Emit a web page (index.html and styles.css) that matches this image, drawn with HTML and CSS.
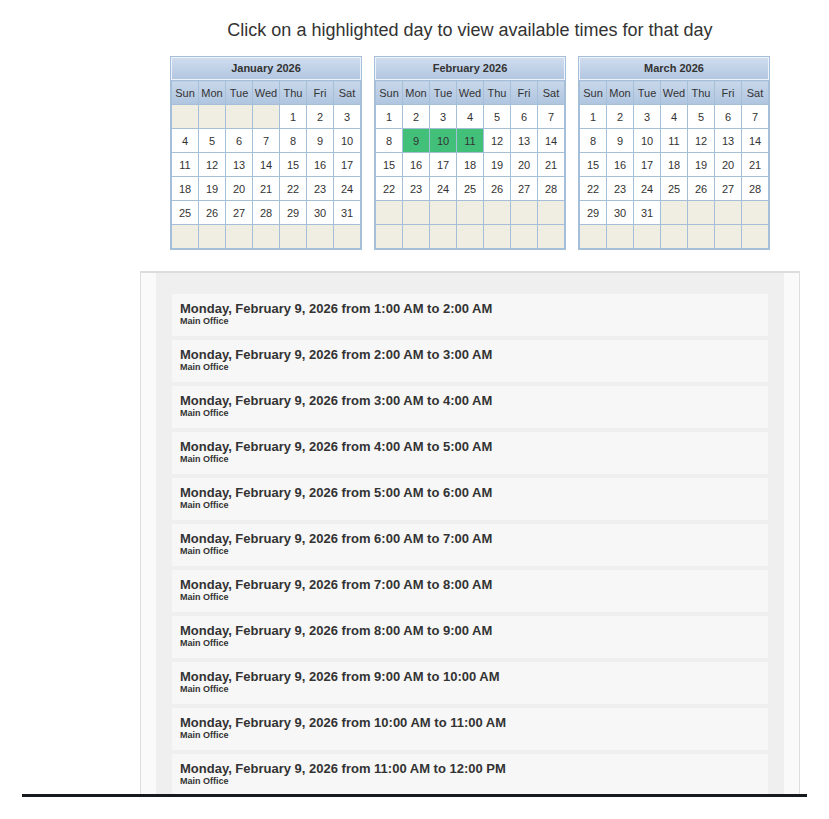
FILE: index.html
```html
<!DOCTYPE html>
<html lang="en">
  <head>
    <meta charset="UTF-8" />
    <meta name="viewport" content="width=device-width, initial-scale=1.0" />
    <title>Book an Appointment</title>
    <link rel="stylesheet" href="styles.css">
  </head>
  <body>
    <div class="wrap">
      <h1 class="intro">Click on a highlighted day to view available times for that day</h1>

      <div class="cals">
        <div class="cal">
          <div class="cal-title">January 2026</div>
          <table>
            <tr><th>Sun</th><th>Mon</th><th>Tue</th><th>Wed</th><th>Thu</th><th>Fri</th><th>Sat</th></tr>
            <tr><td class="off"></td><td class="off"></td><td class="off"></td><td class="off"></td><td>1</td><td>2</td><td>3</td></tr>
            <tr><td>4</td><td>5</td><td>6</td><td>7</td><td>8</td><td>9</td><td>10</td></tr>
            <tr><td>11</td><td>12</td><td>13</td><td>14</td><td>15</td><td>16</td><td>17</td></tr>
            <tr><td>18</td><td>19</td><td>20</td><td>21</td><td>22</td><td>23</td><td>24</td></tr>
            <tr><td>25</td><td>26</td><td>27</td><td>28</td><td>29</td><td>30</td><td>31</td></tr>
            <tr><td class="off"></td><td class="off"></td><td class="off"></td><td class="off"></td><td class="off"></td><td class="off"></td><td class="off"></td></tr>
          </table>
        </div>

        <div class="cal">
          <div class="cal-title">February 2026</div>
          <table>
            <tr><th>Sun</th><th>Mon</th><th>Tue</th><th>Wed</th><th>Thu</th><th>Fri</th><th>Sat</th></tr>
            <tr><td>1</td><td>2</td><td>3</td><td>4</td><td>5</td><td>6</td><td>7</td></tr>
            <tr><td>8</td><td class="open">9</td><td class="open">10</td><td class="open">11</td><td>12</td><td>13</td><td>14</td></tr>
            <tr><td>15</td><td>16</td><td>17</td><td>18</td><td>19</td><td>20</td><td>21</td></tr>
            <tr><td>22</td><td>23</td><td>24</td><td>25</td><td>26</td><td>27</td><td>28</td></tr>
            <tr><td class="off"></td><td class="off"></td><td class="off"></td><td class="off"></td><td class="off"></td><td class="off"></td><td class="off"></td></tr>
            <tr><td class="off"></td><td class="off"></td><td class="off"></td><td class="off"></td><td class="off"></td><td class="off"></td><td class="off"></td></tr>
          </table>
        </div>

        <div class="cal">
          <div class="cal-title">March 2026</div>
          <table>
            <tr><th>Sun</th><th>Mon</th><th>Tue</th><th>Wed</th><th>Thu</th><th>Fri</th><th>Sat</th></tr>
            <tr><td>1</td><td>2</td><td>3</td><td>4</td><td>5</td><td>6</td><td>7</td></tr>
            <tr><td>8</td><td>9</td><td>10</td><td>11</td><td>12</td><td>13</td><td>14</td></tr>
            <tr><td>15</td><td>16</td><td>17</td><td>18</td><td>19</td><td>20</td><td>21</td></tr>
            <tr><td>22</td><td>23</td><td>24</td><td>25</td><td>26</td><td>27</td><td>28</td></tr>
            <tr><td>29</td><td>30</td><td>31</td><td class="off"></td><td class="off"></td><td class="off"></td><td class="off"></td></tr>
            <tr><td class="off"></td><td class="off"></td><td class="off"></td><td class="off"></td><td class="off"></td><td class="off"></td><td class="off"></td></tr>
          </table>
        </div>
      </div>

      <div class="times">
        <div class="times-inner">
          <div class="slot"><div class="slot-when">Monday, February 9, 2026 from 1:00 AM to 2:00 AM</div><div class="slot-where">Main Office</div></div>
          <div class="slot"><div class="slot-when">Monday, February 9, 2026 from 2:00 AM to 3:00 AM</div><div class="slot-where">Main Office</div></div>
          <div class="slot"><div class="slot-when">Monday, February 9, 2026 from 3:00 AM to 4:00 AM</div><div class="slot-where">Main Office</div></div>
          <div class="slot"><div class="slot-when">Monday, February 9, 2026 from 4:00 AM to 5:00 AM</div><div class="slot-where">Main Office</div></div>
          <div class="slot"><div class="slot-when">Monday, February 9, 2026 from 5:00 AM to 6:00 AM</div><div class="slot-where">Main Office</div></div>
          <div class="slot"><div class="slot-when">Monday, February 9, 2026 from 6:00 AM to 7:00 AM</div><div class="slot-where">Main Office</div></div>
          <div class="slot"><div class="slot-when">Monday, February 9, 2026 from 7:00 AM to 8:00 AM</div><div class="slot-where">Main Office</div></div>
          <div class="slot"><div class="slot-when">Monday, February 9, 2026 from 8:00 AM to 9:00 AM</div><div class="slot-where">Main Office</div></div>
          <div class="slot"><div class="slot-when">Monday, February 9, 2026 from 9:00 AM to 10:00 AM</div><div class="slot-where">Main Office</div></div>
          <div class="slot"><div class="slot-when">Monday, February 9, 2026 from 10:00 AM to 11:00 AM</div><div class="slot-where">Main Office</div></div>
          <div class="slot"><div class="slot-when">Monday, February 9, 2026 from 11:00 AM to 12:00 PM</div><div class="slot-where">Main Office</div></div>
        </div>
      </div>
    </div>
    <div class="rule"></div>
  </body>
</html>
```

FILE: styles.css
```css
body {
  margin: 0;
  font-family: "Liberation Sans", Arial, Helvetica, sans-serif;
  color: #333;
  background-color: #fff;
}
.wrap {
  width: 660px;
  margin-left: 140px;
}
.intro {
  margin: 0;
  padding-top: 19px;
  font-size: 18px;
  font-weight: normal;
  line-height: 22px;
  text-align: center;
  color: #333;
}
.cals {
  display: flex;
  justify-content: center;
  gap: 12px;
  margin-top: 15px;
}
.cal {
  width: 192px;
  box-sizing: border-box;
  border: 1px solid #a4bfd7;
  background-color: #fff;
}
.cal-title {
  height: 21px;
  line-height: 21px;
  border: 1px solid #eef3f9;
  background: linear-gradient(#cfdcee, #b2c7e1);
  font-size: 11px;
  font-weight: bold;
  text-align: center;
}
.cal table {
  width: 100%;
  border-collapse: collapse;
  table-layout: fixed;
}
.cal th,
.cal td {
  border: 1px solid #a4bfd7;
  padding: 0;
  height: 23px;
  font-size: 11px;
  text-align: center;
}
.cal th {
  font-weight: normal;
  background: linear-gradient(#c8d7ea, #afc5df);
}
.cal td {
  background-color: #fff;
}
.cal td.off {
  background-color: #f0ede3;
}
.cal td.open {
  background-color: #42c07a;
}
.times {
  margin-top: 21px;
  height: 523px;
  overflow: hidden;
  box-sizing: border-box;
  border-top: 2px solid #dcdcdc;
  border-left: 1px solid #dedede;
  border-right: 1px solid #dedede;
  padding: 0 15px;
  background-color: #fafafa;
}
.times-inner {
  background-color: #efefef;
  padding: 21px 16px;
  min-height: 100%;
}
.slot {
  height: 42px;
  box-sizing: border-box;
  margin-bottom: 4px;
  padding: 7px 8px 0;
  background-color: #f7f7f7;
}
.slot-when {
  font-size: 13px;
  font-weight: bold;
  line-height: 15px;
}
.slot-where {
  font-size: 9px;
  font-weight: bold;
  line-height: 10px;
}
.rule {
  width: 785px;
  height: 3px;
  margin-left: 22px;
  background-color: #16191d;
}
```
